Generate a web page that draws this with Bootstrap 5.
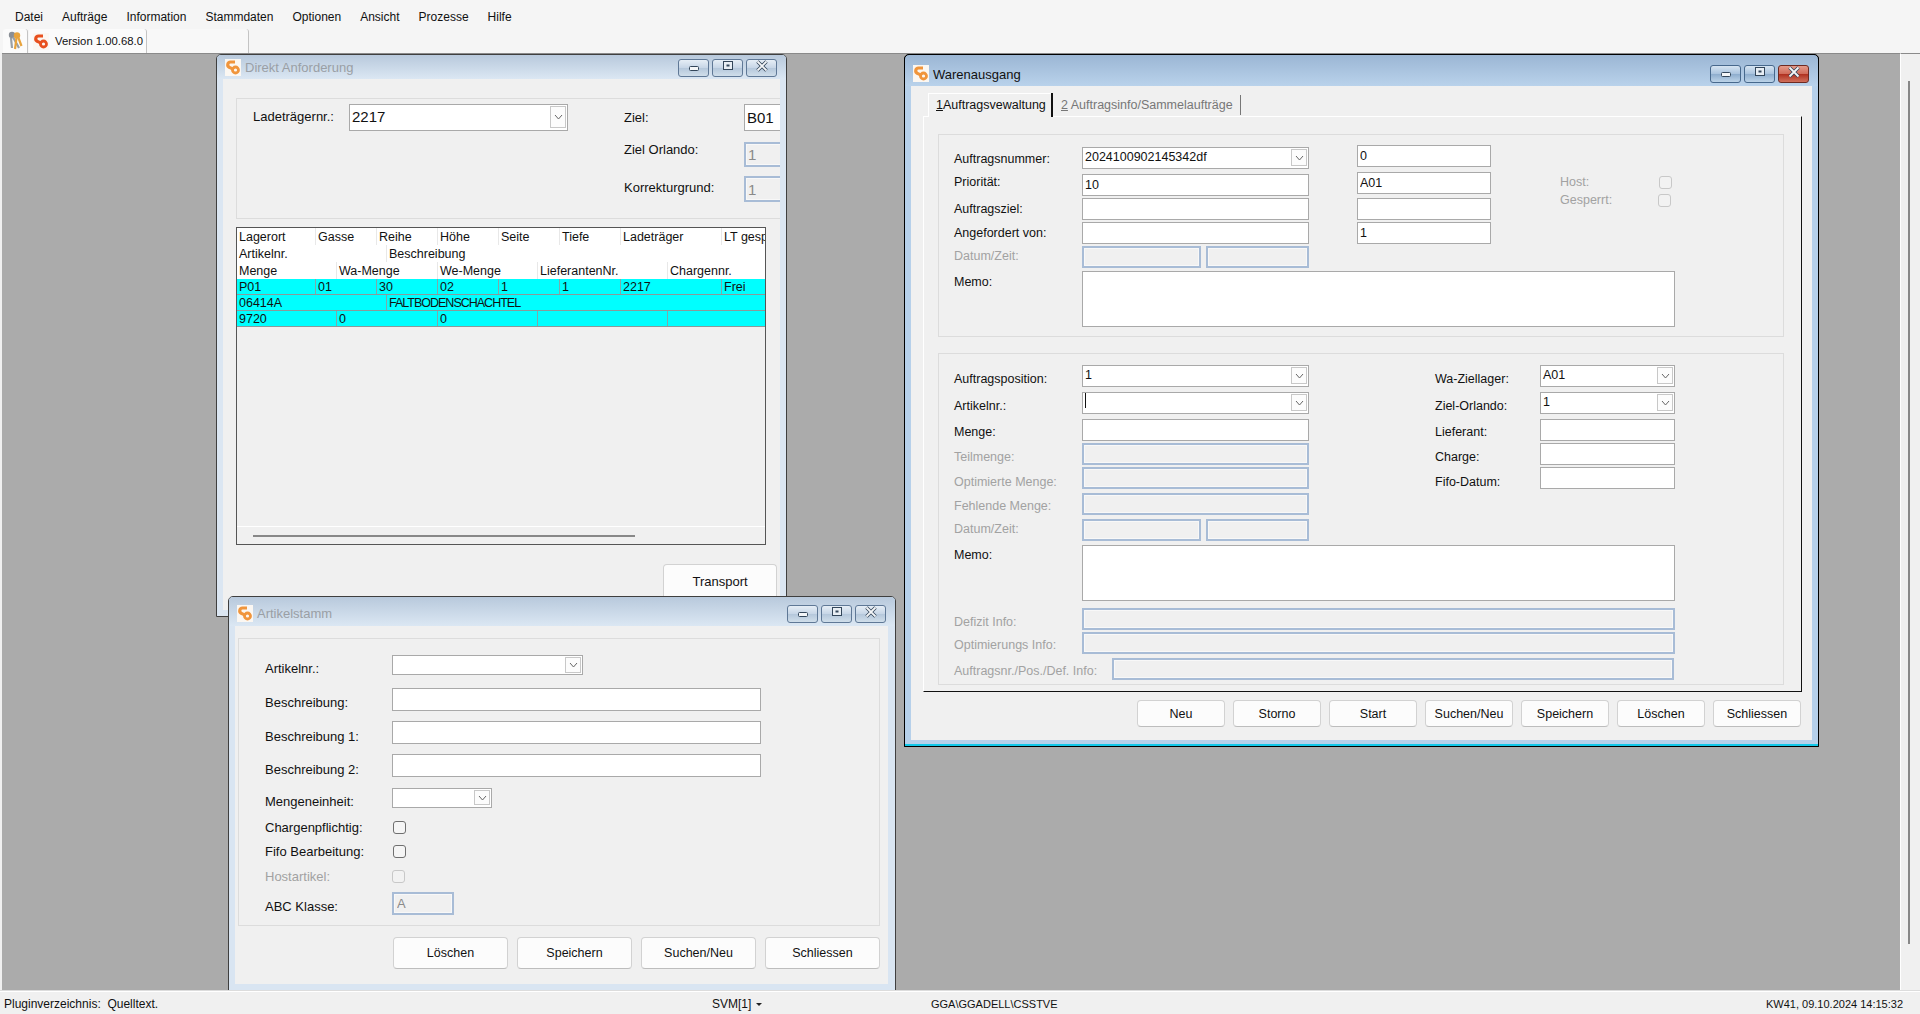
<!DOCTYPE html>
<html lang="de">
<head>
  <meta charset="UTF-8" />
  <title>Warenausgang</title>
  <meta name="viewport" content="width=device-width, initial-scale=1" />
  <link href="https://cdn.jsdelivr.net/npm/bootstrap@5.3.3/dist/css/bootstrap.min.css" rel="stylesheet" />
  <style>
    html, body { height: 1014px; overflow: hidden; }
    body { background: #f0f0f0; color: #111; font: 12.5px/16px "Liberation Sans", Arial, sans-serif; }

    /* menu und toolbar */
    .menu-bar { height: 29px; padding: 4px 8px 0 7px; background: #f5f5f5; font-size: 12px; }
    .menu-bar a { color: #111; text-decoration: none; padding: 0 8px; margin-right: 3px; }
    .tool-bar { height: 24px; padding-left: 3px; background: #f5f5f5; }
    .tool-tab { height: 24px; background: #fbfbfb; border-right: 1px solid #c4c4c4; border-radius: 3px 3px 0 0; }
    .tt-key { width: 25px; margin-right: 1px; }
    .tt-ver { width: 118px; padding-left: 4px; gap: 6px; font-size: 11.3px; }
    .tt-empty { width: 102px; background: #f8f8f8; }

    /* desktop */
    .work-area { height: 937px; padding-left: 2px; }
    .desk { flex: 0 0 1899px; position: relative; overflow: hidden; background: #ababab; border-top: 1px solid #8a8a8a; border-right: 1px solid #fff; }
    .side-strip { flex: 1; padding-left: 7px; padding-top: 27px; border-top: 1px solid #8a8a8a; }
    .side-thumb { width: 2px; height: 863px; background: #888; }
    .status-bar { height: 24px; border-top: 1px solid #dcdcdc; box-shadow: inset 0 1px 0 #fff; color: #111; font-size: 12px; line-height: 26px; }
    .st-left { width: 712px; padding-left: 4px; }
    .st-svm { width: 219px; }
    .st-caret { display: inline-block; margin-left: 5px; border: 3px solid transparent; border-top-color: #222; border-bottom: 0; vertical-align: 2px; }
    .st-user { font-size: 11px; }
    .st-clock { width: 154px; font-size: 11px; }

    /* fenster */
    .win { position: absolute; border: 1px solid #3f3f3f; border-radius: 5px 5px 0 0; overflow: hidden; background: #dbe6f2; }
    .win-a { left: 214px; top: 0; width: 571px; height: 563px; }
    .win-b { left: 226px; top: 542px; width: 668px; height: 400px; background: #d9e5f2; }
    .win-c { left: 902px; top: 0; width: 915px; height: 693px; background: #b6d0ea; border-color: #0a0a0a; outline: 1px solid #000; outline-offset: -1px; box-shadow: inset 0 -2px 0 #12c8e8; }
    .win-head { background: linear-gradient(#b8c9dc, #dbe7f3); color: #9a9fa5; font-size: 13px; }
    .win-a .win-head { height: 24px; padding: 4px 9px 0 8px; }
    .win-b .win-head { height: 29px; padding: 8px 9px 0 8px; }
    .win-c .win-head { height: 31px; padding: 10px 9px 0 8px; background: linear-gradient(#9bb6d4, #b9d2eb); color: #111; }
    .win-c .win-title { padding-top: 1px; }
    .win-logo { width: 16px; height: 17px; flex: none; margin-right: 4px; }
    .win-title { line-height: 18px; }
    .ctl { width: 31px; height: 18px; margin-left: 3px; border: 1px solid #5f7896; border-radius: 3px; background: linear-gradient(#e6eef6 0, #c6d5e6 50%, #b4c7db 51%, #d0deea 100%); }
    .win-c .ctl { background: linear-gradient(#d6e4f2 0, #a9c3de 50%, #8eadcd 51%, #bcd3e8 100%); border-color: #47688c; }
    .win-c .ctl-close { background: linear-gradient(#e59a8a 0, #d06a58 50%, #b0301f 51%, #d0705c 100%); border-color: #6e2a22; }
    .ctl svg { width: 14px; height: 12px; display: block; }
    .win-body { background: #f0f0f0; }
    .win-a .win-body { margin: 0 6px; height: 531px; padding: 19px 0 0 13px; overflow: hidden; }
    .win-b .win-body { margin: 0 6px; width: 653px; height: 358px; padding: 12px 0 0 3px; }
    .win-c .win-body { margin: 0 6px; height: 654px; padding-top: 7px; }
    .grp { border: 1px solid #dcdcdc; }

    /* felder */
    .fld { height: 22px; padding: 0 2px; border: 1px solid #a9a9a9; border-radius: 0; font: inherit; color: #111; background: #fff; min-height: 0; box-shadow: none; line-height: 18px; }
    .fld:disabled { background: #f0f0f0; border: 2px solid #a8bcd6; box-shadow: inset 0 0 0 1px #f8f8f8; color: #8a8a8a; opacity: 1; }
    .combo { display: flex; height: 22px; border: 1px solid #a9a9a9; background: #fff; }
    .combo-val { flex: 1; padding: 0 2px; line-height: 18px; overflow: hidden; white-space: nowrap; }
    .combo-btn { width: 16px; margin: 1px 1px 2px 0; border: 1px solid #c8c8c8; background: #fcfcfc; display: flex; align-items: center; justify-content: center; }
    .combo-btn svg { width: 9px; height: 6px; }
    .text-caret { display: inline-block; width: 1px; height: 15px; background: #111; vertical-align: -2px; }
    .cap { flex: none; white-space: nowrap; }
    .off { color: #a2a2a2; }
    .chk { width: 13px; height: 13px; margin: 0; flex: none; border: 1px solid #6f6f6f; border-radius: 3px; background: #f5f5f5; appearance: none; display: block; }
    .chk:disabled { border-color: #c8c8c8; background: #f2f2f2; }
    .act-btn { color: #111; background: #fcfcfc; border: 1px solid #d2d2d2; border-bottom-color: #bdbdbd; border-radius: 4px; padding: 0; font: inherit; font-size: 12.5px; }

    /* zeilenhoehen */
    .rh13 { height: 13px; } .rh20 { height: 20px; } .rh22 { height: 22px; } .rh23 { height: 23px; }

    /* label versatz zum feld */
    .d2 { margin-top: 2px; } .d4 { margin-top: 4px; } .d6 { margin-top: 6px; } .d7 { margin-top: 7px; }
    .d8 { margin-top: 8px; } .d9 { margin-top: 9px; } .d10 { margin-top: 10px; }
    .u2 { margin-bottom: 2px; } .u6 { margin-bottom: 6px; } .u9 { margin-bottom: 9px; }
    .g2 { margin-top: 2px; } .g3 { margin-top: 3px; } .g4 { margin-top: 4px; } .g5 { margin-top: 5px; } .g7 { margin-top: 7px; }
    .g9 { margin-top: 9px; } .g10 { margin-top: 10px; } .g11 { margin-top: 11px; } .g12 { margin-top: 12px; } .g13 { margin-top: 13px; }

    /* Direkt Anforderung */
    .a-grp { width: 600px; height: 121px; padding: 5px 0 0 16px; font-size: 13px; }
    .a-cap1 { width: 96px; line-height: 26px; }
    .a-combo { width: 219px; height: 27px; font-size: 15px; }
    .a-combo .combo-val { line-height: 24px; }
    .a-side { margin-left: 56px; }
    .a-cap2 { width: 120px; }
    .a-fld { width: 60px; height: 27px; font-size: 15px; }
    .a-fld2 { height: 25px; }
    .a-fld3 { height: 26px; }
    .a-list { width: 530px; height: 318px; margin-top: 8px; border: 1px solid #555; background: #f0f0f0; overflow: hidden; }
    .tr { display: grid; height: 17px; line-height: 19px; background: #fff; }
    .tr > div { padding-left: 2px; white-space: nowrap; overflow: hidden; border-right: 1px solid #e8e8e8; }
    .tr > div:last-child { border-right: 0; }
    .tr-b { height: 16px; line-height: 17px; background: #0ff; border-bottom: 1px solid #8a9a9a; }
    .tr-b > div { border-right-color: #80a8a8; }
    .caps-tight { letter-spacing: -1px; }
    .cols-1 { grid-template-columns: 79px 61px 61px 61px 61px 61px 101px 1fr; }
    .cols-2 { grid-template-columns: 150px 1fr; }
    .cols-3 { grid-template-columns: 100px 101px 100px 130px 1fr; }
    .a-scroll { height: 18px; margin-top: auto; border-top: 1px solid #fff; padding: 8px 0 0 16px; }
    .a-thumb { width: 382px; height: 2px; background: #888; }
    .a-send { display: block; width: 114px; height: 36px; margin: 19px 0 0 427px; font-size: 13px; }

    /* Artikelstamm */
    .b-grp { width: 642px; height: 288px; padding: 16px 0 0 26px; font-size: 13px; }
    .b-cap { width: 127px; }
    .b-combo { width: 191px; height: 20px; }
    .b-combo .combo-btn { margin-bottom: 1px; }
    .b-unit { width: 100px; height: 20px; }
    .b-fld { width: 369px; height: 23px; }
    .b-abc { width: 62px; height: 23px; padding: 0 3px; }
    .b-chk2 { margin-left: 1px; }
    .b-btns { margin: 11px 0 0 155px; gap: 9px; }
    .b-btns .act-btn { width: 115px; height: 32px; }

    /* Warenausgang */
    .tab-strip { height: 23px; padding-left: 17px; position: relative; z-index: 1; }
    .tab-on { width: 125px; height: 24px; padding: 4px 0 0 8px; background: #f0f0f0; border-right: 2px solid #111; box-shadow: inset 1px 1px 0 #fff; }
    .tab-off { width: 188px; height: 20px; margin-top: 2px; padding: 2px 0 0 8px; border-right: 1px solid #777; color: #777; }
    .tab-key { text-decoration: underline; }
    .tab-body { width: 879px; height: 576px; margin-left: 12px; border-top: 1px solid #fff; border-left: 1px solid #fff; border-right: 1px solid #111; border-bottom: 1px solid #111; padding: 17px 0 0 14px; }
    .c-grp { width: 846px; padding-left: 15px; }
    .c-grp1 { height: 203px; padding-top: 10px; }
    .c-grp2 { height: 332px; margin-top: 16px; padding-top: 11px; }
    .c-cap { width: 128px; }
    .c-ctl { width: 227px; }
    .c-half { width: 119px; }
    .c-half2 { width: 103px; margin-left: 5px; }
    .c-right { width: 134px; margin-left: 48px; }
    .c-flag { margin: 29px 0 0 69px; }
    .c-flag-cap { width: 99px; }
    .c-flag-cap2 { width: 98px; }
    .c-memo { width: 593px; height: 56px; display: block; resize: none; }
    .c-wide { width: 593px; }
    .c-cap-l { width: 158px; }
    .c-last { width: 562px; }
    .c-side { margin-left: 126px; }
    .c-side-cap { width: 105px; }
    .c-side-ctl { width: 135px; }
    .c-btns { margin: 8px 11px 0 226px; }
    .c-btns .act-btn { width: 88px; height: 27px; }
  </style>
</head>
<body>
  <svg width="0" height="0" class="d-block">
    <symbol id="logo" viewBox="0 0 16 17">
      <rect width="16" height="17" fill="#fbf7f2" />
      <path d="M10 3H5.500a2.800 2.800 0 0 0-1 5.400l4 2" fill="none" stroke="currentColor" stroke-width="3.200" />
      <circle cx="10.500" cy="11" r="3" fill="none" stroke="currentColor" stroke-width="2.800" />
    </symbol>
    <symbol id="chev" viewBox="0 0 9 6"><path d="M1 1l3.500 4 3.500-4" fill="none" stroke="#666" /></symbol>
    <symbol id="i-min" viewBox="0 0 14 12"><rect x="2.500" y="6.500" width="9" height="4" rx="1" fill="#f4f6f8" stroke="#33465a" /></symbol>
    <symbol id="i-max" viewBox="0 0 14 12"><rect x="2.500" y="1.500" width="9" height="8" fill="#e8eef4" stroke="#33465a" /><rect x="5.500" y="4.500" width="3" height="2" fill="#33465a" /></symbol>
    <symbol id="i-x" viewBox="0 0 14 12"><path d="M2.500 1.500l9 9M11.500 1.500l-9 9" stroke="#33465a" stroke-width="3.400" /><path d="M2.500 1.500l9 9M11.500 1.500l-9 9" stroke="#f4f6f8" stroke-width="1.800" /></symbol>
  </svg>

  <nav class="menu-bar d-flex align-items-center">
    <a href="#">Datei</a><a href="#">Aufträge</a><a href="#">Information</a><a href="#">Stammdaten</a><a href="#">Optionen</a><a href="#">Ansicht</a><a href="#">Prozesse</a><a href="#">Hilfe</a>
  </nav>
  <div class="tool-bar d-flex">
    <div class="tool-tab tt-key d-flex align-items-center justify-content-center">
      <svg width="16" height="20" viewBox="0 0 16 20">
        <circle cx="5" cy="4" r="3.200" fill="#8a8f96" />
        <path d="M6 6l6 11M4 7l1 10" stroke="#9aa0a6" stroke-width="2.200" />
        <circle cx="10" cy="4.500" r="3.200" fill="#e8a33c" />
        <path d="M9.500 7L8 18M11.500 7l3 8" stroke="#e8a33c" stroke-width="2.200" />
      </svg>
    </div>
    <div class="tool-tab tt-ver d-flex align-items-center text-nowrap">
      <svg width="16" height="19" class="flex-shrink-0" style="color:#e8501e"><use href="#logo" /></svg>
      <span>Version 1.00.68.0</span>
    </div>
    <div class="tool-tab tt-empty"></div>
  </div>

  <div class="work-area d-flex">
    <div class="desk">

      <section class="win win-a">
        <div class="win-head d-flex">
          <svg class="win-logo" style="color:#f0953c"><use href="#logo" /></svg>
          <span class="win-title">Direkt Anforderung</span>
          <div class="d-flex ms-auto">
            <div class="ctl"><svg class="m-auto"><use href="#i-min" /></svg></div>
            <div class="ctl"><svg class="m-auto"><use href="#i-max" /></svg></div>
            <div class="ctl"><svg class="m-auto"><use href="#i-x" /></svg></div>
          </div>
        </div>
        <div class="win-body">
          <div class="grp a-grp d-flex">
            <div class="cap a-cap1">Ladeträgernr.:</div>
            <div class="combo a-combo">
              <div class="combo-val">2217</div>
              <div class="combo-btn"><svg><use href="#chev" /></svg></div>
            </div>
            <div class="a-side">
              <div class="d-flex align-items-center">
                <span class="cap a-cap2">Ziel:</span>
                <input class="form-control fld a-fld" value="B01" />
              </div>
              <div class="d-flex align-items-center g11">
                <span class="cap a-cap2 u9">Ziel Orlando:</span>
                <input class="form-control fld a-fld a-fld2" value="1" disabled />
              </div>
              <div class="d-flex align-items-center g9">
                <span class="cap a-cap2 u2">Korrekturgrund:</span>
                <input class="form-control fld a-fld a-fld3" value="1" disabled />
              </div>
            </div>
          </div>

          <div class="a-list d-flex flex-column">
            <div class="tr cols-1"><div>Lagerort</div><div>Gasse</div><div>Reihe</div><div>Höhe</div><div>Seite</div><div>Tiefe</div><div>Ladeträger</div><div>LT gesperrt</div></div>
            <div class="tr cols-2"><div>Artikelnr.</div><div>Beschreibung</div></div>
            <div class="tr cols-3"><div>Menge</div><div>Wa-Menge</div><div>We-Menge</div><div>LieferantenNr.</div><div>Chargennr.</div></div>
            <div class="tr tr-b cols-1"><div>P01</div><div>01</div><div>30</div><div>02</div><div>1</div><div>1</div><div>2217</div><div>Frei</div></div>
            <div class="tr tr-b cols-2"><div>06414A</div><div class="caps-tight">FALTBODENSCHACHTEL</div></div>
            <div class="tr tr-b cols-3"><div>9720</div><div>0</div><div>0</div><div></div><div></div></div>
            <div class="a-scroll"><div class="a-thumb"></div></div>
          </div>

          <button type="button" class="btn act-btn a-send">Transport</button>
        </div>
      </section>

      <section class="win win-b">
        <div class="win-head d-flex">
          <svg class="win-logo" style="color:#f0953c"><use href="#logo" /></svg>
          <span class="win-title">Artikelstamm</span>
          <div class="d-flex ms-auto">
            <div class="ctl"><svg class="m-auto"><use href="#i-min" /></svg></div>
            <div class="ctl"><svg class="m-auto"><use href="#i-max" /></svg></div>
            <div class="ctl"><svg class="m-auto"><use href="#i-x" /></svg></div>
          </div>
        </div>
        <div class="win-body">
          <div class="grp b-grp">
            <div class="d-flex align-items-center rh20">
              <span class="cap b-cap d8">Artikelnr.:</span>
              <div class="combo b-combo"><div class="combo-val"></div><div class="combo-btn"><svg><use href="#chev" /></svg></div></div>
            </div>
            <div class="d-flex align-items-center rh23 g13">
              <span class="cap b-cap d7">Beschreibung:</span>
              <input class="form-control fld b-fld" />
            </div>
            <div class="d-flex align-items-center rh22 g10">
              <span class="cap b-cap d10">Beschreibung 1:</span>
              <input class="form-control fld b-fld rh22" />
            </div>
            <div class="d-flex align-items-center rh23 g11">
              <span class="cap b-cap d9">Beschreibung 2:</span>
              <input class="form-control fld b-fld" />
            </div>
            <div class="d-flex align-items-center rh20 g11">
              <span class="cap b-cap d8">Mengeneinheit:</span>
              <div class="combo b-unit"><div class="combo-val"></div><div class="combo-btn"><svg><use href="#chev" /></svg></div></div>
            </div>
            <div class="d-flex align-items-center rh13 g13">
              <span class="cap b-cap">Chargenpflichtig:</span>
              <input type="checkbox" class="chk b-chk2" />
            </div>
            <div class="d-flex align-items-center rh13 g11">
              <span class="cap b-cap">Fifo Bearbeitung:</span>
              <input type="checkbox" class="chk b-chk2" />
            </div>
            <div class="d-flex align-items-center rh13 g12">
              <span class="cap b-cap off">Hostartikel:</span>
              <input type="checkbox" class="chk" disabled />
            </div>
            <div class="d-flex align-items-center rh23 g9">
              <span class="cap b-cap d7">ABC Klasse:</span>
              <input class="form-control fld b-abc" value="A" disabled />
            </div>
          </div>
          <div class="b-btns d-flex">
            <button type="button" class="btn act-btn">Löschen</button>
            <button type="button" class="btn act-btn">Speichern</button>
            <button type="button" class="btn act-btn">Suchen/Neu</button>
            <button type="button" class="btn act-btn">Schliessen</button>
          </div>
        </div>
      </section>

      <section class="win win-c">
        <div class="win-head d-flex">
          <svg class="win-logo" style="color:#f0953c"><use href="#logo" /></svg>
          <span class="win-title">Warenausgang</span>
          <div class="d-flex ms-auto">
            <div class="ctl"><svg class="m-auto"><use href="#i-min" /></svg></div>
            <div class="ctl"><svg class="m-auto"><use href="#i-max" /></svg></div>
            <div class="ctl ctl-close"><svg class="m-auto"><use href="#i-x" /></svg></div>
          </div>
        </div>
        <div class="win-body">
          <div class="tab-strip d-flex">
            <div class="tab-on"><span class="tab-key">1</span>Auftragsvewaltung</div>
            <div class="tab-off"><span class="tab-key">2</span> Auftragsinfo/Sammelaufträge</div>
          </div>
          <div class="tab-body">
            <div class="grp c-grp c-grp1">
              <div class="d-flex">
                <div class="g2">
                  <div class="d-flex align-items-center rh22">
                    <span class="cap c-cap d2">Auftragsnummer:</span>
                    <div class="combo c-ctl"><div class="combo-val">2024100902145342df</div><div class="combo-btn"><svg><use href="#chev" /></svg></div></div>
                  </div>
                  <div class="d-flex align-items-center rh22 g5">
                    <span class="cap c-cap u6">Priorität:</span>
                    <input class="form-control fld c-ctl" value="10" />
                  </div>
                  <div class="d-flex align-items-center rh22 g2">
                    <span class="cap c-cap">Auftragsziel:</span>
                    <input class="form-control fld c-ctl" />
                  </div>
                  <div class="d-flex align-items-center rh22 g2">
                    <span class="cap c-cap">Angefordert von:</span>
                    <input class="form-control fld c-ctl" />
                  </div>
                  <div class="d-flex align-items-center rh22 g2">
                    <span class="cap c-cap off u2">Datum/Zeit:</span>
                    <input class="form-control fld c-half" disabled />
                    <input class="form-control fld c-half2" disabled />
                  </div>
                </div>
                <div class="c-right">
                  <input class="form-control fld" value="0" />
                  <input class="form-control fld g5" value="A01" />
                  <input class="form-control fld g4" />
                  <input class="form-control fld g2" value="1" />
                </div>
                <div class="c-flag">
                  <div class="d-flex align-items-center">
                    <span class="cap c-flag-cap off">Host:</span>
                    <input type="checkbox" class="chk" disabled />
                  </div>
                  <div class="d-flex align-items-center g2">
                    <span class="cap c-flag-cap2 off">Gesperrt:</span>
                    <input type="checkbox" class="chk" disabled />
                  </div>
                </div>
              </div>
              <div class="d-flex g3">
                <span class="cap c-cap g3">Memo:</span>
                <textarea class="form-control fld c-memo"></textarea>
              </div>
            </div>

            <div class="grp c-grp c-grp2">
              <div class="d-flex">
                <div>
                  <div class="d-flex align-items-center rh22">
                    <span class="cap c-cap d6">Auftragsposition:</span>
                    <div class="combo c-ctl"><div class="combo-val">1</div><div class="combo-btn"><svg><use href="#chev" /></svg></div></div>
                  </div>
                  <div class="d-flex align-items-center rh22 g5">
                    <span class="cap c-cap d6">Artikelnr.:</span>
                    <div class="combo c-ctl"><div class="combo-val"><span class="text-caret"></span></div><div class="combo-btn"><svg><use href="#chev" /></svg></div></div>
                  </div>
                  <div class="d-flex align-items-center rh22 g5">
                    <span class="cap c-cap d4">Menge:</span>
                    <input class="form-control fld c-ctl" />
                  </div>
                  <div class="d-flex align-items-center rh22 g2">
                    <span class="cap c-cap off d6">Teilmenge:</span>
                    <input class="form-control fld c-ctl" disabled />
                  </div>
                  <div class="d-flex align-items-center rh22 g2">
                    <span class="cap c-cap off d8">Optimierte Menge:</span>
                    <input class="form-control fld c-ctl" disabled />
                  </div>
                  <div class="d-flex align-items-center rh22 g4">
                    <span class="cap c-cap off d4">Fehlende Menge:</span>
                    <input class="form-control fld c-ctl" disabled />
                  </div>
                  <div class="d-flex align-items-center rh22 g4">
                    <span class="cap c-cap off u2">Datum/Zeit:</span>
                    <input class="form-control fld c-half" disabled />
                    <input class="form-control fld c-half2" disabled />
                  </div>
                </div>
                <div class="c-side">
                  <div class="d-flex align-items-center rh22">
                    <span class="cap c-side-cap d6">Wa-Ziellager:</span>
                    <div class="combo c-side-ctl"><div class="combo-val">A01</div><div class="combo-btn"><svg><use href="#chev" /></svg></div></div>
                  </div>
                  <div class="d-flex align-items-center rh22 g5">
                    <span class="cap c-side-cap d6">Ziel-Orlando:</span>
                    <div class="combo c-side-ctl"><div class="combo-val">1</div><div class="combo-btn"><svg><use href="#chev" /></svg></div></div>
                  </div>
                  <div class="d-flex align-items-center rh22 g5">
                    <span class="cap c-side-cap d4">Lieferant:</span>
                    <input class="form-control fld c-side-ctl" />
                  </div>
                  <div class="d-flex align-items-center rh22 g2">
                    <span class="cap c-side-cap d6">Charge:</span>
                    <input class="form-control fld c-side-ctl" />
                  </div>
                  <div class="d-flex align-items-center rh22 g2">
                    <span class="cap c-side-cap d8">Fifo-Datum:</span>
                    <input class="form-control fld c-side-ctl" />
                  </div>
                </div>
              </div>
              <div class="d-flex g4">
                <span class="cap c-cap g2">Memo:</span>
                <textarea class="form-control fld c-memo"></textarea>
              </div>
              <div class="d-flex align-items-center rh22 g7">
                <span class="cap c-cap off d6">Defizit Info:</span>
                <input class="form-control fld c-wide" disabled />
              </div>
              <div class="d-flex align-items-center rh22 g2">
                <span class="cap c-cap off d4">Optimierungs Info:</span>
                <input class="form-control fld c-wide" disabled />
              </div>
              <div class="d-flex align-items-center rh22 g4">
                <span class="cap c-cap-l off d4">Auftragsnr./Pos./Def. Info:</span>
                <input class="form-control fld c-last" disabled />
              </div>
            </div>
          </div>
          <div class="c-btns d-flex justify-content-between">
            <button type="button" class="btn act-btn">Neu</button>
            <button type="button" class="btn act-btn">Storno</button>
            <button type="button" class="btn act-btn">Start</button>
            <button type="button" class="btn act-btn">Suchen/Neu</button>
            <button type="button" class="btn act-btn">Speichern</button>
            <button type="button" class="btn act-btn">Löschen</button>
            <button type="button" class="btn act-btn">Schliessen</button>
          </div>
        </div>
      </section>

    </div>
    <div class="side-strip"><div class="side-thumb"></div></div>
  </div>

  <footer class="status-bar d-flex">
    <div class="st-left">Pluginverzeichnis:&nbsp; Quelltext.</div>
    <div class="st-svm">SVM[1]<span class="st-caret"></span></div>
    <div class="flex-grow-1 st-user">GGA\GGADELL\CSSTVE</div>
    <div class="st-clock">KW41, 09.10.2024 14:15:32</div>
  </footer>

  <script src="https://cdn.jsdelivr.net/npm/bootstrap@5.3.3/dist/js/bootstrap.bundle.min.js"></script>
</body>
</html>
